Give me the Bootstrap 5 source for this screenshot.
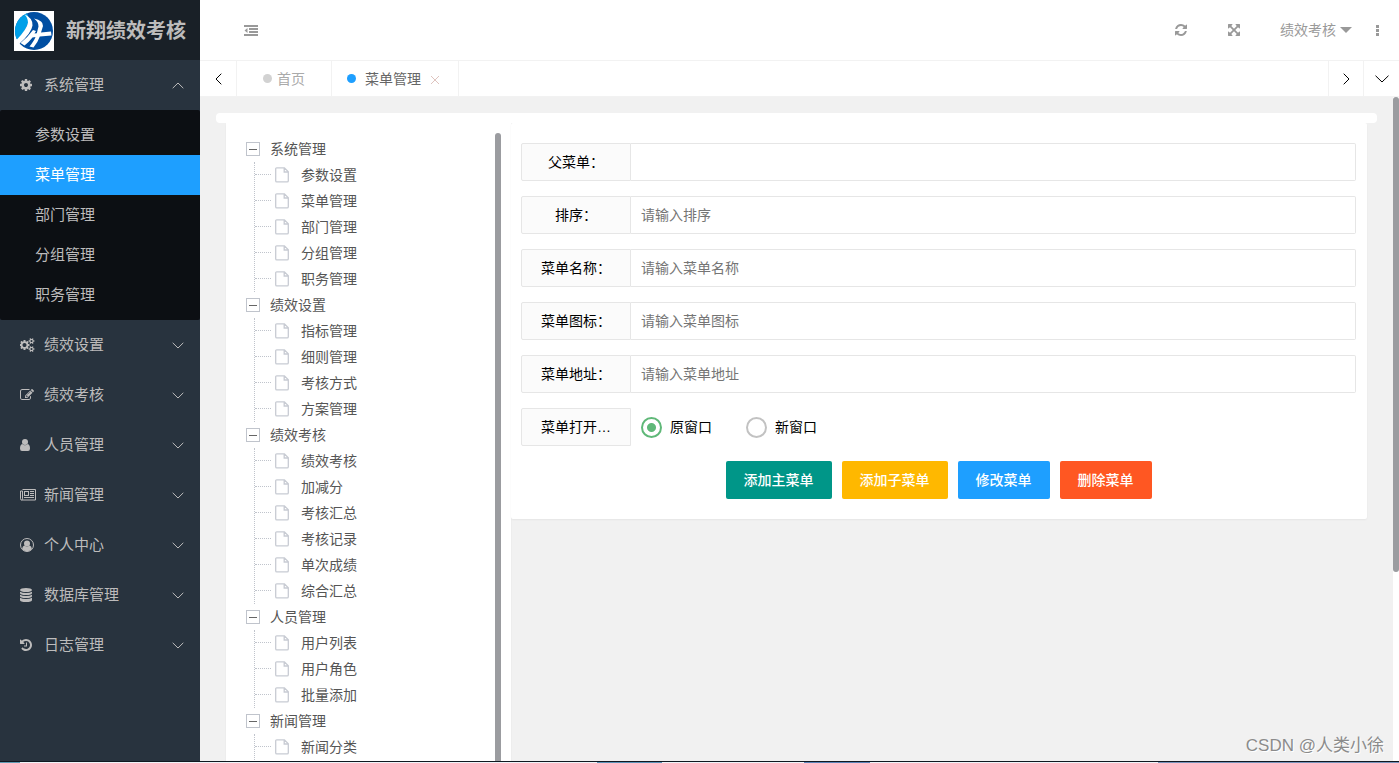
<!DOCTYPE html>
<html lang="zh-CN">
<head>
<meta charset="utf-8">
<meta name="viewport" content="width=device-width, initial-scale=1">
<title>新翔绩效考核</title>
<link rel="stylesheet" href="https://cdn.jsdelivr.net/npm/bootstrap@5.3.0/dist/css/bootstrap.min.css">
<style>
  body { font: 14px/24px "Liberation Sans", "Noto Sans CJK SC", sans-serif; background: #f1f1f1; color: #333; }
  a { color: inherit; text-decoration: none; }
  svg { display: block; fill: currentColor; flex: none; }

  .side { width: 200px; background: #28333e; color: #bdbcbc; font-size: 15px; }
  .brand { height: 60px; padding: 2px 0 0 14px; gap: 12px; background: #192027; font-size: 20px; font-weight: 700; }
  .side-link { height: 50px; padding: 0 16px 0 20px; }
  .side-icon { width: 24px; }
  .side-sub { background: #0c0f13; border-radius: 2px; padding: 5px 0; }
  .side-sub a { display: block; line-height: 40px; padding-left: 35px; }
  .side-sub a.active { background: #1e9fff; color: #fff; }
  .line-icon { fill: none; stroke: currentColor; }

  .topbar { height: 60px; padding: 0 20px 0 44px; color: #999; }
  .topbar .tool { padding-right: 15px; }
  .tabbar { height: 37px; border: solid #f2f2f2; border-width: 1px 0; color: #000; }
  .tabbar > * { border-right: 1px solid #f2f2f2; }
  .tabbar > :last-child { border-right: 0; }
  .plain { border: 0; background: none; padding: 0; color: inherit; }
  .tabbar .plain { border-right: 1px solid #f2f2f2; width: 35px; display: flex; align-items: center; justify-content: center; }
  .tabbar .plain:first-child { width: 37px; }
  .dot { width: 9px; height: 9px; border-radius: 50%; background: #d2d2d2; }
  .tab-home { padding: 0 26px; gap: 5px; color: #aaa; }
  .tab-open { padding: 0 18px 0 15px; gap: 9px; color: #666; }
  .tab-open .dot { background: #1e9fff; }

  .content { padding: 16px 16px 0; }
  .strip { height: 10px; background: #fff; border-radius: 4px; }
  .panels { padding: 0 10px; }
  .track { width: 6px; background: #fff; }
  .thumb { height: 71.5%; background: #9b9ca0; border-radius: 3px; }
  .tree-card { width: 285px; background: #fff; box-shadow: 0 1px 2px rgba(0,0,0,.05); padding: 10px 10px 0 20px; }
  .tree-bar { width: 6px; background: #9b9ca0; border-radius: 3px 3px 0 0; }
  .tree, .tree ul { list-style: none; margin: 0; padding: 0; color: #555; }
  .tree { padding-top: 3px; }
  .tree .node { height: 26px; gap: 10px; }
  .tree ul { margin-left: 8px; border-left: 1px dotted #c0c4cc; }
  .tree li li { height: 26px; }
  .twig { width: 16px; border-top: 1px dotted #c0c4cc; margin: 0 4px 2px 0; }
  .tree li li svg { color: #c8cbd3; margin-right: 12px; }
  .toggle { width: 14px; height: 14px; border: 1px solid #c0c4cc; background: #fff; padding: 0; display: flex; align-items: center; justify-content: center; }
  .toggle::before { content: ""; width: 8px; height: 1px; background: #666; }

  .form-card { background: #fff; border-radius: 2px; box-shadow: 0 1px 2px rgba(0,0,0,.05); padding: 20px 11px 20px 10px; color: #000; }
  .field { height: 38px; margin-bottom: 15px; }
  .field-label { flex: 0 0 110px; border: 1px solid #e6e6e6; border-radius: 2px 0 0 2px; background: #fbfbfb; padding: 6px 15px; text-align: center; }
  .field .form-control { border: 1px solid #e6e6e6; border-left: 0; border-radius: 0 2px 2px 0; font-size: 14px; padding: 6px 10px; line-height: 24px; }
  .field .form-control::placeholder { color: #757575; }
  .choices { gap: 34px; padding-left: 10px; }
  .choice { gap: 8px; margin: 0; padding: 0; }
  .choice .form-check-input { width: 21px; height: 21px; margin: 0; float: none; border: 2px solid #c2c2c2; box-shadow: none; background: #fff; }
  .choice .form-check-input:checked { border-color: #5fb878; background: radial-gradient(circle, #5fb878 4px, #fff 5px); }
  .actions { gap: 10px; }
  .act { height: 38px; padding: 0 18px; border: 0; border-radius: 2px; font-size: 14px; font-weight: 500; color: #fff; }
  .act:hover { color: #fff; opacity: .8; }
  .teal { background: #009688; } .amber { background: #ffb800; } .blue { background: #1e9fff; } .red { background: #ff5722; }

  .mark-text { right: 15px; bottom: 5px; font-size: 17px; color: #8b8b8b; text-shadow: 1px 1px #fff; }
  .edge { height: 2px; border-top: 1px solid #101820; background: linear-gradient(90deg, #5f9cb5 1.4%, #eef3f8 1.4% 42.7%, #5c93b8 42.7% 47.3%, #eef3f8 47.3% 57.5%, #5c84b8 57.5% 62.2%, #eef3f8 62.2% 82.8%, #7893bb 82.8%); }
</style>
</head>
<body>
<svg class="d-none" aria-hidden="true">
  <symbol id="down" viewBox="0 0 12 7"><path d="M.7 .8 6 6 11.3 .8"/></symbol>
  <symbol id="file" viewBox="0 0 14 16"><path fill="none" stroke="currentColor" stroke-width="1.3" d="M1.8.8h7.6l3.9 3.9v9q0 1.2-1.2 1.2H1.8Q.7 14.900.7 13.700V2Q.7.8 1.800.8zM9.200 1v4h4"/></symbol>
</svg>
<div class="d-flex flex-column vh-100 overflow-hidden position-relative">
  <div class="d-flex flex-grow-1 overflow-hidden">

    <aside class="side flex-shrink-0">
      <div class="brand d-flex align-items-center">
        <svg width="40" height="40" viewBox="0 0 40 40"><path fill="#fff" d="M0 0h40v40H0z"/><circle cx="20" cy="20" r="19" fill="#004ea2"/><path fill="#00a0e9" d="M13 2.300A19 19 0 0 0 3.500 29.500Q12 19 14.500 11 15.300 6 13 2.300z"/><path fill="#fff" d="M10.500 3.200Q19 7 18.500 14.500 17.500 22 5 33L2.500 29Q13 18 14 11.500 14 7 10.500 3.200z"/><path fill="#fff" d="M20 7.500Q29.500 9.500 29 15L27 21.500 37 20.500 37.500 24.500 25.800 25.500Q24 31 19.500 36.500L15.500 35.500Q20 30 21.500 26L18.500 26.500Q15 31 10.500 34.500L6.500 32Q14 26 19 19L22 20 20.500 22.500 22.800 22.200 24.500 15.500Q24.500 10.500 20 7.500z"/></svg>
        <span>新翔绩效考核</span>
      </div>
      <nav>
        <a href="#" class="side-link d-flex align-items-center"><span class="side-icon"><svg width="12" height="14" viewBox="128 0 1536 1792"><path d="M1152 896q0-106-75-181t-181-75-181 75-75 181 75 181 181 75 181-75 75-181zm512-109v222q0 12-8 23t-20 13l-185 28q-19 54-39 91 35 50 107 138 10 12 10 25t-9 23q-27 37-99 108t-94 71q-12 0-26-9l-138-108q-44 23-91 38-16 136-29 186-7 28-36 28h-222q-14 0-24.500-8.500t-11.500-21.500l-28-184q-49-16-90-37l-141 107q-10 9-25 9-14 0-25-11-126-114-165-168-7-10-7-23 0-12 8-23 15-21 51-66.500t54-70.500q-27-50-41-99l-183-27q-13-2-21-12.500t-8-23.500v-222q0-12 8-23t19-13l186-28q14-46 39-92-40-57-107-138-10-12-10-24 0-10 9-23 26-36 98.500-107.500t94.500-71.500q13 0 26 10l138 107q44-23 91-38 16-136 29-186 7-28 36-28h222q14 0 24.500 8.500t11.500 21.500l28 184q49 16 90 37l142-107q9-9 24-9 13 0 25 10 129 119 165 170 7 8 7 22 0 12-8 23-15 21-51 66.500t-54 70.500q26 50 41 98l183 28q13 2 21 12.500t8 23.500z"/></svg></span>系统管理<svg class="line-icon ms-auto" width="12" height="7" viewBox="0 0 12 7"><path d="M.7 6.200 6 1l5.300 5.200"/></svg></a>
        <div class="side-sub">
          <a href="#">参数设置</a>
          <a href="#" class="active">菜单管理</a>
          <a href="#">部门管理</a>
          <a href="#">分组管理</a>
          <a href="#">职务管理</a>
        </div>
        <a href="#" class="side-link d-flex align-items-center"><span class="side-icon"><svg width="15" height="14" viewBox="0 0 1920 1792"><path d="M832 896q0-106-75-181t-181-75-181 75-75 181 75 181 181 75 181-75 75-181zm768 512q0-52-38-90t-90-38-90 38-38 90q0 53 37.500 90.500t90.500 37.500 90.500-37.500 37.500-90.500zm0-1024q0-52-38-90t-90-38-90 38-38 90q0 53 37.500 90.500t90.500 37.500 90.500-37.500 37.500-90.500zm-384 421v185q0 10-7 19.500t-16 10.500l-155 24q-11 35-32 76 34 48 90 115 7 10 7 20 0 12-7 19-23 30-82.500 89.500t-78.500 59.500q-11 0-21-7l-115-90q-37 19-77 31-11 108-23 155-7 24-30 24h-186q-11 0-20-7.500t-10-17.500l-23-153q-34-10-75-31l-118 89q-7 7-20 7-11 0-21-8-144-133-144-160 0-9 7-19 10-14 41-53t47-61q-23-44-35-82l-152-24q-10-1-17-9.500t-7-19.500v-185q0-10 7-19.500t16-10.500l155-24q11-35 32-76-34-48-90-115-7-11-7-20 0-12 7-20 22-30 82-89t79-59q11 0 21 7l115 90q34-18 77-32 11-108 23-154 7-24 30-24h186q11 0 20 7.500t10 17.500l23 153q34 10 75 31l118-89q8-7 20-7 11 0 21 8 144 133 144 160 0 9-7 19-12 16-42 54t-45 60q23 48 34 82l152 23q10 2 17 10.500t7 19.500zm640 533v140q0 16-149 31-12 27-30 52 51 113 51 138 0 4-4 7-122 71-124 71-8 0-46-47t-52-68q-20 2-30 2t-30-2q-14 21-52 68t-46 47q-2 0-124-71-4-3-4-7 0-25 51-138-18-25-30-52-149-15-149-31v-140q0-16 149-31 13-29 30-52-51-113-51-138 0-4 4-7 4-2 35-20t59-34 30-16q8 0 46 46.500t52 67.500q20-2 30-2t30 2q51-71 92-112l6-2q4 0 124 70 4 3 4 7 0 25-51 138 17 23 30 52 149 15 149 31zm0-1024v140q0 16-149 31-12 27-30 52 51 113 51 138 0 4-4 7-122 71-124 71-8 0-46-47t-52-68q-20 2-30 2t-30-2q-14 21-52 68t-46 47q-2 0-124-71-4-3-4-7 0-25 51-138-18-25-30-52-149-15-149-31v-140q0-16 149-31 13-29 30-52-51-113-51-138 0-4 4-7 4-2 35-20t59-34 30-16q8 0 46 46.500t52 67.500q20-2 30-2t30 2q51-71 92-112l6-2q4 0 124 70 4 3 4 7 0 25-51 138 17 23 30 52 149 15 149 31z"/></svg></span>绩效设置<svg class="line-icon ms-auto" width="12" height="7"><use href="#down"/></svg></a>
        <a href="#" class="side-link d-flex align-items-center"><span class="side-icon"><svg width="14" height="14" viewBox="0 0 1792 1792"><path d="M888 1184l116-116-152-152-116 116v56h96v96h56zm440-720q-16-16-33 1l-350 350q-17 17-1 33t33-1l350-350q17-17 1-33zm80 594v190q0 119-84.500 203.500t-203.500 84.500h-832q-119 0-203.500-84.500t-84.500-203.500v-832q0-119 84.500-203.500t203.500-84.500h832q63 0 117 25 15 7 18 23 3 17-9 29l-49 49q-14 14-32 8-23-6-45-6h-832q-66 0-113 47t-47 113v832q0 66 47 113t113 47h832q66 0 113-47t47-113v-126q0-13 9-22l64-64q15-15 35-7t20 29zm-96-738l288 288-672 672h-288v-288zm444 132l-92 92-288-288 92-92q28-28 68-28t68 28l152 152q28 28 28 68t-28 68z"/></svg></span>绩效考核<svg class="line-icon ms-auto" width="12" height="7"><use href="#down"/></svg></a>
        <a href="#" class="side-link d-flex align-items-center"><span class="side-icon"><svg width="10" height="14" viewBox="0 0 10 14"><circle cx="5" cy="4" r="3"/><path d="M2.300 6Q0 6.500 0 10.500 0 13 2 13h6q2 0 2-2.500Q10 6.500 7.700 6 5 8.600 2.300 6z"/></svg></span>人员管理<svg class="line-icon ms-auto" width="12" height="7"><use href="#down"/></svg></a>
        <a href="#" class="side-link d-flex align-items-center"><span class="side-icon"><svg width="16" height="14" viewBox="0 0 16 14"><path fill="none" stroke="currentColor" d="M2.500 1.500h13v10.500H1.500q-1 0-1-1.200V3h2v7.800q0 1.200-1 1.200"/><path fill-rule="evenodd" d="M4 3h5v5H4zM5 4v3h3V4zM10 3h4v1h-4zM10 5h4v1h-4zM10 7h4v1h-4zM4 9h10v1H4z"/></svg></span>新闻管理<svg class="line-icon ms-auto" width="12" height="7"><use href="#down"/></svg></a>
        <a href="#" class="side-link d-flex align-items-center"><span class="side-icon"><svg width="14" height="14" viewBox="0 0 14 14"><circle cx="7" cy="7" r="6.500" fill="none" stroke="currentColor"/><circle cx="7" cy="5.500" r="3"/><path d="M4.500 7.500Q2.300 8 2.200 11.200 4 13.300 7 13.300t4.800-2.100Q11.700 8 9.500 7.500 7 9.500 4.500 7.500z"/></svg></span>个人中心<svg class="line-icon ms-auto" width="12" height="7"><use href="#down"/></svg></a>
        <a href="#" class="side-link d-flex align-items-center"><span class="side-icon"><svg width="12" height="14" viewBox="0 0 12 14"><ellipse cx="6" cy="2" rx="6" ry="2"/><path d="M0 3.700Q2 5 6 5t6-1.300V5q0 2-6 2T0 5zM0 6.700Q2 8 6 8t6-1.300V8q0 2-6 2T0 8zM0 9.700Q2 11 6 11t6-1.300V12q0 2-6 2t-6-2z"/></svg></span>数据库管理<svg class="line-icon ms-auto" width="12" height="7"><use href="#down"/></svg></a>
        <a href="#" class="side-link d-flex align-items-center"><span class="side-icon"><svg width="12" height="14" viewBox="128 0 1536 1792"><path d="M1664 896q0 156-61 298t-164 245-245 164-298 61q-172 0-327-72.500t-264-204.500q-7-10-6.500-22.500t8.500-20.500l137-138q10-9 25-9 16 2 23 12 73 95 179 147t225 52q104 0 198.500-40.500t163.500-109.500 109.500-163.500 40.500-198.500-40.500-198.500-109.500-163.500-163.500-109.500-198.500-40.500q-98 0-188 35.500t-160 101.500l137 138q31 30 14 69-17 40-59 40h-448q-26 0-45-19t-19-45v-448q0-42 40-59 39-17 69 14l130 129q107-101 244.500-156.500t284.500-55.500q156 0 298 61t245 164 164 245 61 298zm-640-288v448q0 14-9 23t-23 9h-320q-14 0-23-9t-9-23v-64q0-14 9-23t23-9h224v-352q0-14 9-23t23-9h64q14 0 23 9t9 23z"/></svg></span>日志管理<svg class="line-icon ms-auto" width="12" height="7"><use href="#down"/></svg></a>
      </nav>
    </aside>

    <div class="d-flex flex-column flex-grow-1 overflow-hidden">
      <header class="topbar d-flex align-items-center bg-white flex-shrink-0">
        <button class="plain me-auto" aria-label="收起菜单"><svg width="14" height="11" viewBox="0 0 14 11" fill="#555"><path d="M0 0h14v2H0zM5 3h9v2H5zM5 6h9v2H5zM0 9h14v2H0zM3.500 3v5L.5 5.500z"/></svg></button>
        <button class="plain tool me-4" aria-label="刷新"><svg width="14" height="14" viewBox="0 0 1792 1792"><path d="M1639 1056q0 5-1 7-64 268-268 434.500t-478 166.500q-146 0-282.500-55t-243.500-157l-129 129q-19 19-45 19t-45-19-19-45v-448q0-26 19-45t45-19h448q26 0 45 19t19 45-19 45l-137 137q71 66 161 102t187 36q134 0 250-65t186-179q11-17 53-117 8-23 30-23h192q13 0 22.500 9.500t9.500 22.500zm25-800v448q0 26-19 45t-45 19h-448q-26 0-45-19t-19-45 19-45l138-138q-148-137-349-137-134 0-250 65t-186 179q-11 17-53 117-8 23-30 23h-199q-13 0-22.500-9.500t-9.500-22.500v-7q65-268 270-434.500t480-166.500q146 0 284 55.500t245 156.500l130-129q19-19 45-19t45 19 19 45z"/></svg></button>
        <button class="plain tool me-4" aria-label="全屏"><svg width="14" height="14" viewBox="0 0 1792 1792"><path d="M1411 541l-355 355 355 355 144-144q29-31 70-14 39 17 39 59v448q0 26-19 45t-45 19h-448q-42 0-59-40-17-39 14-69l144-144-355-355-355 355 144 144q31 30 14 69-17 40-59 40h-448q-26 0-45-19t-19-45v-448q0-42 40-59 39-17 69 14l144 144 355-355-355-355-144 144q-19 19-45 19-12 0-24-5-40-17-40-59v-448q0-26 19-45t45-19h448q42 0 59 40 17 39-14 69l-144 144 355 355 355-355-144-144q-31-30-14-69 17-40 59-40h448q26 0 45 19t19 45v448q0 42-39 59-13 5-25 5-26 0-45-19z"/></svg></button>
        <a href="#" class="d-flex align-items-center me-4">绩效考核<svg class="ms-1" width="12" height="6" viewBox="0 0 12 6" fill="#bbb"><path d="M0 0h12L6 6z"/></svg></a>
        <button class="plain" aria-label="更多"><svg width="3" height="11" viewBox="0 0 3 11"><path d="M0 0h3v3H0zM0 4h3v3H0zM0 8h3v3H0z"/></svg></button>
      </header>

      <div class="tabbar d-flex bg-white flex-shrink-0">
        <button class="plain" aria-label="向左"><svg class="line-icon" width="7" height="12" viewBox="0 0 7 12"><path d="M6.300.7 1 6l5.300 5.300"/></svg></button>
        <a href="#" class="tab-home d-flex align-items-center"><span class="dot"></span>首页</a>
        <a href="#" class="tab-open d-flex align-items-center"><span class="dot"></span>菜单管理<svg class="line-icon" width="10" height="10" viewBox="0 0 10 10"><path stroke="#dfc4bf" d="m1 2 8 8M9 2l-8 8"/></svg></a>
        <span class="flex-grow-1"></span>
        <button class="plain" aria-label="向右"><svg class="line-icon" width="7" height="12" viewBox="0 0 7 12"><path d="M.7.7 6 6 .7 11.300"/></svg></button>
        <button class="plain border-0" aria-label="标签操作"><svg class="line-icon" width="14" height="8" viewBox="0 0 14 8"><path d="M.5.7 7 7 13.500.7"/></svg></button>
      </div>

      <div class="d-flex flex-grow-1 overflow-hidden">
        <main class="content d-flex flex-column flex-grow-1 overflow-hidden">
          <div class="strip flex-shrink-0"></div>
          <div class="panels d-flex flex-grow-1 overflow-hidden">
            <section class="tree-card d-flex flex-shrink-0 overflow-hidden">
              <ul class="tree flex-grow-1" id="tree"></ul>
              <div class="tree-bar"></div>
            </section>
            <form class="form-card flex-grow-1 align-self-start">
              <div class="field d-flex"><label class="field-label" for="parent">父菜单：</label><input class="form-control" id="parent"></div>
              <div class="field d-flex"><label class="field-label" for="order">排序：</label><input class="form-control" id="order" placeholder="请输入排序"></div>
              <div class="field d-flex"><label class="field-label" for="name">菜单名称：</label><input class="form-control" id="name" placeholder="请输入菜单名称"></div>
              <div class="field d-flex"><label class="field-label" for="icon">菜单图标：</label><input class="form-control" id="icon" placeholder="请输入菜单图标"></div>
              <div class="field d-flex"><label class="field-label" for="url">菜单地址：</label><input class="form-control" id="url" placeholder="请输入菜单地址"></div>
              <div class="field d-flex align-items-center" role="radiogroup" aria-labelledby="open-label">
                <span class="field-label" id="open-label">菜单打开…</span>
                <div class="choices d-flex">
                  <div class="choice form-check d-flex align-items-center"><input class="form-check-input" type="radio" name="open" id="same" checked><label for="same">原窗口</label></div>
                  <div class="choice form-check d-flex align-items-center"><input class="form-check-input" type="radio" name="open" id="new"><label for="new">新窗口</label></div>
                </div>
              </div>
              <div class="actions d-flex justify-content-center">
                <button type="button" class="btn act teal">添加主菜单</button>
                <button type="button" class="btn act amber">添加子菜单</button>
                <button type="button" class="btn act blue">修改菜单</button>
                <button type="button" class="btn act red">删除菜单</button>
              </div>
            </form>
          </div>
        </main>
        <div class="track flex-shrink-0"><div class="thumb"></div></div>
      </div>
    </div>
  </div>
  <div class="edge flex-shrink-0"></div>
  <div class="mark-text position-absolute">CSDN @人类小徐</div>
</div>
<script src="https://cdn.jsdelivr.net/npm/bootstrap@5.3.0/dist/js/bootstrap.bundle.min.js"></script>
<script>
  const menus = {
    '系统管理': ['参数设置', '菜单管理', '部门管理', '分组管理', '职务管理'],
    '绩效设置': ['指标管理', '细则管理', '考核方式', '方案管理'],
    '绩效考核': ['绩效考核', '加减分', '考核汇总', '考核记录', '单次成绩', '综合汇总'],
    '人员管理': ['用户列表', '用户角色', '批量添加'],
    '新闻管理': ['新闻分类']
  };
  document.getElementById('tree').innerHTML = Object.entries(menus).map(([group, items]) =>
    `<li><div class="node d-flex align-items-center"><button class="toggle" aria-label="折叠${group}"></button>${group}</div><ul>` +
    items.map(item => `<li class="d-flex align-items-center"><span class="twig"></span><svg width="14" height="16"><use href="#file"/></svg><a href="#">${item}</a></li>`).join('') +
    '</ul></li>').join('');
</script>
</body>
</html>
